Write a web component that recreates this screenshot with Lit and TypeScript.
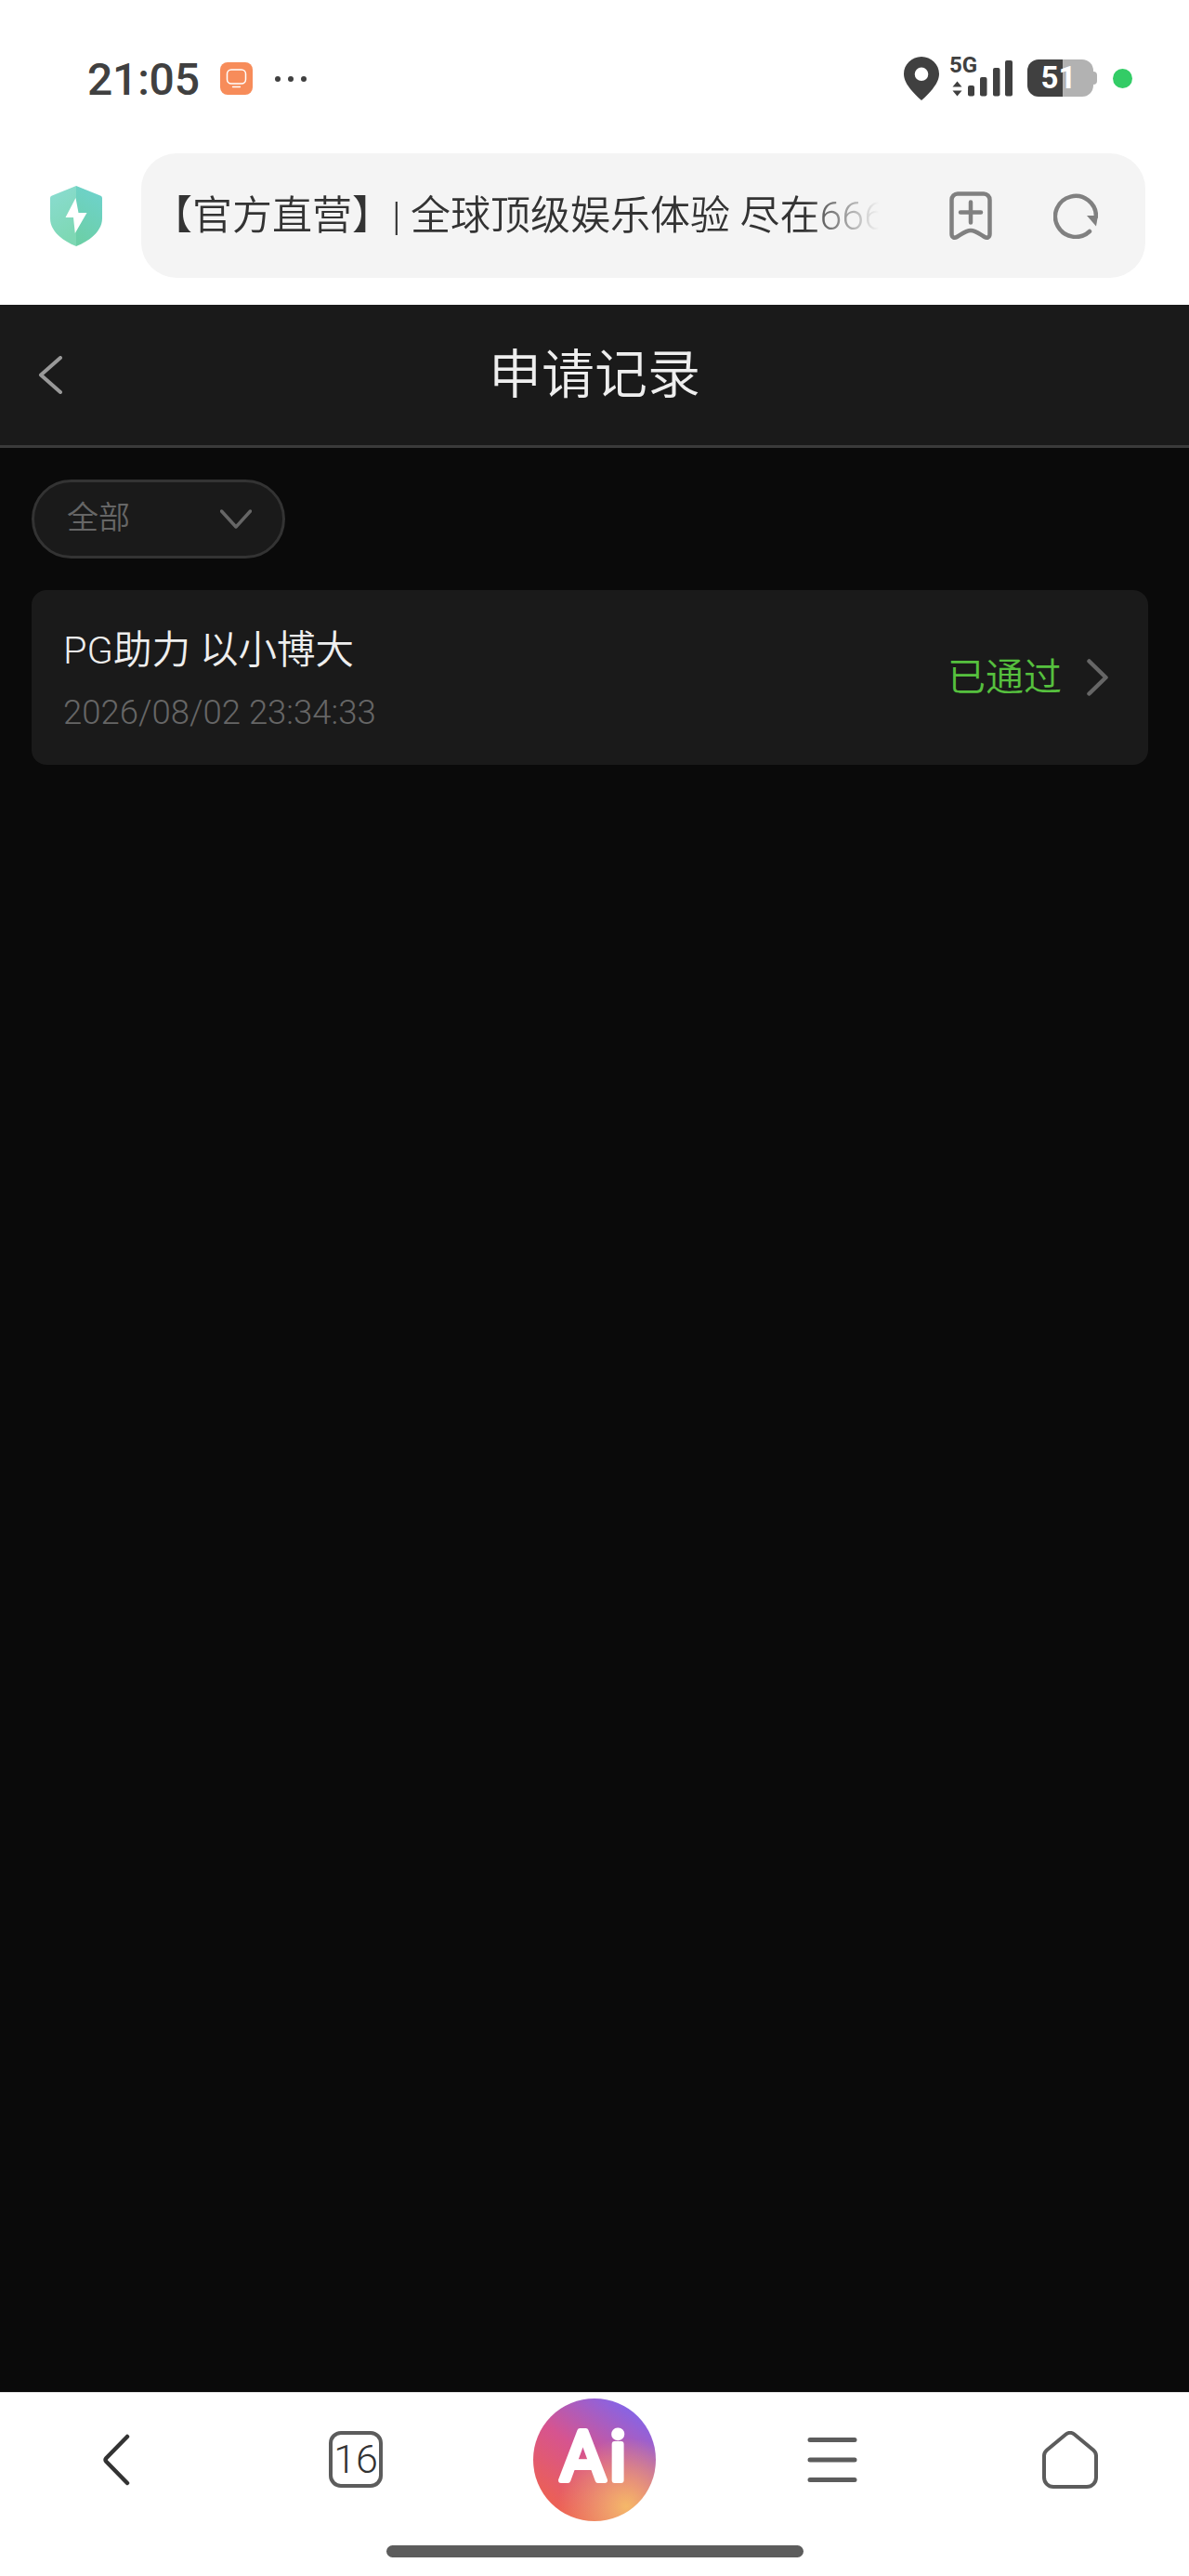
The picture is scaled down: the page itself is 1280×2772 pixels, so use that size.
import { LitElement, html, css } from "lit";
import { customElement } from "lit/decorators.js";

@customElement("app-root")
export class AppRoot extends LitElement {
  static styles = css`
    :host {
      display: flex;
      flex-direction: column;
      width: 1280px;
      height: 2772px;
      background: #fff;
      font-family: Roboto, "Noto Sans CJK SC", sans-serif;
      overflow: hidden;
    }
    svg { display: block; flex: none; }
    .status {
      height: 165px;
      flex: none;
      display: flex;
      align-items: flex-start;
      padding: 61px 0 0 94px;
      box-sizing: border-box;
    }
    .time {
      font-size: 48px;
      font-weight: 500;
      line-height: 49px;
      color: #404040;
      width: 120px;
      letter-spacing: -0.2px;
    }
    .notif { margin: 6px 0 0 23px; }
    .dots { margin: 21px 0 0 24px; }
    .right-cluster {
      margin-left: auto;
      display: flex;
      align-items: flex-start;
      padding-right: 61px;
    }
    .signal { margin-left: 11px; overflow: visible; }
    .signal text {
      font-family: Roboto, sans-serif;
      font-weight: 700;
      font-size: 24px;
      fill: #404040;
    }
    .battery {
      margin: 3px 0 0 15px;
      width: 71px;
      height: 40px;
      border-radius: 12px;
      background: linear-gradient(90deg, #404040 0 38px, #b2b2b2 38px 100%);
      color: #fff;
      font-size: 33px;
      font-weight: 700;
      line-height: 40px;
      text-align: center;
      padding-right: 4px;
      box-sizing: border-box;
    }
    .nub {
      margin-top: 16px;
      width: 4px;
      height: 14px;
      background: #b2b2b2;
      border-radius: 0 4px 4px 0;
    }
    .live {
      margin: 13px 0 0 17px;
      width: 21px;
      height: 21px;
      border-radius: 50%;
      background: #33cc66;
    }
    .urlrow {
      height: 163px;
      flex: none;
      display: flex;
      align-items: flex-start;
      padding-left: 54px;
      box-sizing: border-box;
    }
    .shield { margin: 35px 42px 0 0; }
    .pill {
      width: 1081px;
      height: 134px;
      border-radius: 38px;
      background: #f4f4f4;
      display: flex;
      align-items: center;
      padding-left: 12px;
      box-sizing: border-box;
    }
    .urltext {
      width: 782px;
      overflow: hidden;
      white-space: nowrap;
      font-size: 43px;
      font-weight: 350;
      line-height: 60px;
      color: #333;
      -webkit-mask-image: linear-gradient(90deg, #000 0, #000 702px, transparent 782px);
      mask-image: linear-gradient(90deg, #000 0, #000 702px, transparent 782px);
    }
    .bookmark { margin-left: 76px; }
    .reload { margin-left: 66px; }
    .page {
      flex: 1;
      min-height: 0;
      background: #0a0a0a;
      display: flex;
      flex-direction: column;
    }
    .header {
      height: 154px;
      flex: none;
      box-sizing: border-box;
      background: #1a1a1a;
      border-bottom: 3px solid #3a3a3a;
      display: grid;
      grid-template-columns: 1fr auto 1fr;
      align-items: center;
    }
    .header .back { margin-left: 41px; }
    .title {
      font-size: 57px;
      font-weight: 350;
      line-height: 70px;
      color: #eee;
    }
    .content {
      padding: 34px 44px 0 34px;
      display: flex;
      flex-direction: column;
      align-items: flex-start;
      gap: 34px;
    }
    .filter {
      width: 273px;
      height: 85px;
      box-sizing: border-box;
      border: 3px solid #333;
      border-radius: 43px;
      background: #1a1a1a;
      display: flex;
      align-items: center;
      justify-content: space-between;
      padding: 0 33px 0 35px;
      font-size: 34px;
      font-weight: 350;
      color: #666;
    }
    .filter span { line-height: 44px; margin-top: -3px; }
    .card {
      width: 100%;
      height: 188px;
      box-sizing: border-box;
      border-radius: 16px;
      background: #1a1a1a;
      display: flex;
      align-items: center;
      justify-content: space-between;
      padding: 0 43px 0 34px;
    }
    .info { display: flex; flex-direction: column; gap: 21px; margin-top: 5px; }
    .name {
      font-size: 41.5px;
      font-weight: 350;
      line-height: 50px;
      color: #eee;
    }
    .date {
      font-size: 36.5px;
      font-weight: 300;
      line-height: 42px;
      color: #666;
    }
    .state { display: flex; align-items: center; gap: 27px; }
    .approved {
      font-size: 41px;
      font-weight: 350;
      line-height: 50px;
      color: #56c03e;
    }
    .nav {
      flex: none;
      height: 198px;
      box-sizing: border-box;
      border-top: 1px solid #e4e4e4;
      background: #fff;
      display: flex;
      flex-direction: column;
      align-items: center;
      padding-top: 6px;
    }
    .navrow {
      width: 1280px;
      display: grid;
      grid-template-columns: repeat(5, 256px);
      justify-items: center;
      align-items: center;
      height: 132px;
    }
    .navback { margin-left: -7px; }
    .tabs {
      width: 58px;
      height: 61px;
      box-sizing: border-box;
      border: 4px solid #5c5c5c;
      border-radius: 13px;
      display: flex;
      align-items: center;
      justify-content: center;
      font-size: 43px;
      font-weight: 300;
      line-height: 1;
      color: #333;
      margin: -2px 0 0 -2px;
    }
    .ai {
      width: 132px;
      height: 132px;
      border-radius: 50%;
      background:
        radial-gradient(circle at 76% 88%, rgba(245, 184, 105, 1) 0, rgba(245, 184, 105, 0) 48%),
        linear-gradient(215deg, #7b66f2 8%, #d6548f 50%, #ee6150 88%);
    }
    .ai text {
      font-family: Roboto, sans-serif;
      font-weight: 400;
      font-size: 75px;
      letter-spacing: 4px;
      fill: #fff;
      stroke: #fff;
      stroke-width: 6px;
      stroke-linejoin: round;
    }
    .menu { margin-left: -1px; }
    .home { margin-left: -1px; }
    .indicator {
      margin-top: 26px;
      width: 449px;
      height: 13px;
      border-radius: 7px;
      background: #5c5c5c;
    }
  `;

  render() {
    return html`
      <div class="status">
        <div class="time">21:05</div>
        <svg class="notif" width="35" height="35" viewBox="0 0 35 35">
          <rect width="35" height="35" rx="8" fill="#f78c5a"/>
          <rect x="7.500" y="8" width="20" height="15" rx="4.500" fill="none" stroke="#fff" stroke-width="1.500"/>
          <path d="M13.500 26.500h8" stroke="#fff" stroke-width="1.300" stroke-linecap="round"/>
        </svg>
        <svg class="dots" width="34" height="6" viewBox="0 0 34 6">
          <circle cx="3" cy="3" r="3" fill="#404040"/>
          <circle cx="17" cy="3" r="3" fill="#404040"/>
          <circle cx="31" cy="3" r="3" fill="#404040"/>
        </svg>
        <div class="right-cluster">
          <svg class="pin" width="38" height="47" viewBox="0 0 38 47">
            <path fill-rule="evenodd" fill="#404040" d="M19 0C8.500 0 0 8.300 0 18.600c0 6.400 3.400 11.700 7.400 16.600 3.400 4.100 7.400 8.300 11.600 11.800 4.200-3.500 8.200-7.700 11.600-11.800 4-4.900 7.400-10.200 7.400-16.600C38 8.300 29.500 0 19 0Zm0 11.500a7.300 7.300 0 1 1 0 14.600 7.300 7.300 0 0 1 0-14.600Z"/>
          </svg>
          <svg class="signal" width="69" height="44" viewBox="0 0 69 44">
            <text x="0" y="17">5G</text>
            <path d="M8.500 26.500l5 6h-10zM8.500 42.500l-5-6h10z" fill="#404040"/>
            <rect x="20" y="31" width="7" height="11.500" rx="2" fill="#404040"/>
            <rect x="33" y="22" width="7.500" height="20.500" rx="2" fill="#404040"/>
            <rect x="47" y="12" width="7.500" height="30.500" rx="2" fill="#404040"/>
            <rect x="60" y="4" width="8" height="38.500" rx="2" fill="#404040"/>
          </svg>
          <div class="battery">51</div>
          <div class="nub"></div>
          <div class="live"></div>
        </div>
      </div>

      <div class="urlrow">
        <svg class="shield" width="56" height="65" viewBox="0 0 56 65">
          <defs>
            <linearGradient id="sl" x1="0" y1="0" x2="0.3" y2="1">
              <stop offset="0" stop-color="#8adcd2"/>
              <stop offset="1" stop-color="#7ed8b4"/>
            </linearGradient>
            <linearGradient id="sr" x1="0.6" y1="0" x2="0.3" y2="1">
              <stop offset="0" stop-color="#6ed2cb"/>
              <stop offset="1" stop-color="#6ccfa6"/>
            </linearGradient>
          </defs>
          <path fill="url(#sl)" d="M28 0 2 10.500c-1.300.5-2 1.500-2 2.800V35c0 13 12 23.500 28 30Z"/>
          <path fill="url(#sr)" d="M28 0 54 10.500c1.300.5 2 1.500 2 2.800V35c0 13-12 23.500-28 30Z"/>
          <path fill="#fff" d="M27.500 13 16.500 34H25l1.800 17L39.500 29H30.500Z"/>
        </svg>
        <div class="pill">
          <div class="urltext">【官方直营】| 全球顶级娱乐体验 尽在666</div>
          <svg class="bookmark" width="46" height="52" viewBox="0 0 46 52" fill="none" stroke="#808080" stroke-width="4.500" stroke-linecap="round" stroke-linejoin="round">
            <path d="M9 2.500h28a6.500 6.500 0 0 1 6.500 6.500v37c0 3.500-3 4.500-5.500 3-5-3-10-7-15-7s-10 4-15 7c-2.500 1.500-5.500.5-5.500-3V9A6.500 6.500 0 0 1 9 2.500Z"/>
            <path d="M12 22.500h22M23 11.500v22"/>
          </svg>
          <svg class="reload" width="48" height="50" viewBox="0 0 48 50" fill="none">
            <path d="M39 42a22 22 0 1 1 7-16" stroke="#808080" stroke-width="4.500" stroke-linecap="round"/>
            <path d="M36 25h12l-2 11.500Z" fill="#808080"/>
          </svg>
        </div>
      </div>

      <div class="page">
        <div class="header">
          <svg class="back" width="26" height="41" viewBox="0 0 26 41" fill="none">
            <path d="M24 2 3 20.500 24 39" stroke="#999" stroke-width="4" stroke-linecap="round" stroke-linejoin="round"/>
          </svg>
          <div class="title">申请记录</div>
          <div></div>
        </div>
        <div class="content">
          <div class="filter">
            <span>全部</span>
            <svg width="34" height="21" viewBox="0 0 34 21" fill="none">
              <path d="M1.500 2 17 19 32.500 2" stroke="#666" stroke-width="3.500" stroke-linecap="round" stroke-linejoin="round"/>
            </svg>
          </div>
          <div class="card">
            <div class="info">
              <div class="name">PG助力 以小博大</div>
              <div class="date">2026/08/02 23:34:33</div>
            </div>
            <div class="state">
              <span class="approved">已通过</span>
              <svg width="23" height="40" viewBox="0 0 23 40" fill="none">
                <path d="M2.500 2.500 20.500 20 2.500 37.500" stroke="#666" stroke-width="4.500" stroke-linecap="round" stroke-linejoin="round"/>
              </svg>
            </div>
          </div>
        </div>
      </div>

      <div class="nav">
        <div class="navrow">
          <svg class="navback" width="30" height="56" viewBox="0 0 30 56" fill="none">
            <path d="M27 3 4.500 26a3 3 0 0 0 0 4L27 53" stroke="#333" stroke-width="4.500" stroke-linecap="round" stroke-linejoin="round"/>
          </svg>
          <div class="tabs">16</div>
          <div class="ai">
            <svg width="132" height="132" viewBox="0 0 132 132">
              <text x="29" y="88">Ai</text>
            </svg>
          </div>
          <svg class="menu" width="54" height="50" viewBox="0 0 54 50" fill="none" stroke="#5c5c5c" stroke-width="5" stroke-linecap="round">
            <path d="M3 3.500h48M3 25h48M3 46.500h48"/>
          </svg>
          <svg class="home" width="60" height="62" viewBox="0 0 60 62" fill="none">
            <path d="M25.500 3.500 5 20.500c-2 1.700-3 3.500-3 6V50a10 10 0 0 0 10 10h36a10 10 0 0 0 10-10V26.500c0-2.500-1-4.300-3-6L34.500 3.500a7 7 0 0 0-9 0Z" stroke="#5c5c5c" stroke-width="4"/>
          </svg>
        </div>
        <div class="indicator"></div>
      </div>
    `;
  }
}
